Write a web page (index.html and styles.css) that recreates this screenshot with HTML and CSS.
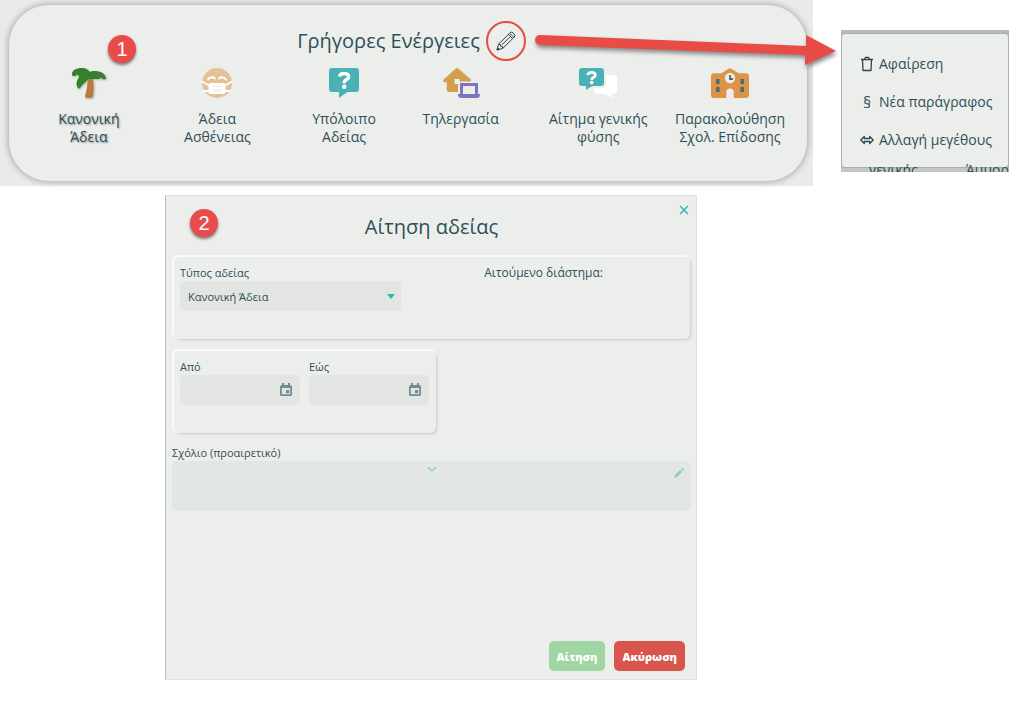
FILE: index.html
```html
<!DOCTYPE html>
<html lang="el">
<head>
<meta charset="utf-8">
<title>Γρήγορες Ενέργειες</title>
<link rel="stylesheet" href="styles.css">
</head>
<body>
<div class="top">
  <section class="stage">
    <div class="panel">
      <header class="panel-head">
        <h1 class="panel-title">Γρήγορες Ενέργειες</h1>
        <button class="edit" type="button" aria-label="Επεξεργασία">
          <svg width="20" height="20" viewBox="0 0 20 20" fill="none" stroke="#2a4550" stroke-width="1" stroke-linejoin="round"><path d="M1 19 L2.600 13.200 L14 1.800 Q15.500 .4 17.200 2 L18 2.800 Q19.600 4.500 18.200 6 L6.800 17.400Z M2.600 13.200 L4.400 13.500 L4.700 15.300 L6.500 15.600 L6.800 17.400 M12.400 3.400 L16.600 7.600 M13.600 2.200 L17.800 6.400 M6 13.800 L13.800 6"/><path d="M1 19 L1.600 16.600 L3.400 18.300Z" fill="#2a4550"/></svg>
        </button>
      </header>
      <nav class="actions">
        <button class="action active" type="button">
          <svg class="icon" width="38" height="32" viewBox="0 0 38 32"><path fill="#b97b3e" d="M17.500 10.500 H22.500 C24 17 24 23 23 29 Q22.800 31 20.500 31 H17 Q14.800 31 15.100 28.500 C17 22.500 17.800 17 17.500 10.500Z"/><path fill="#37802b" d="M2 7 C2 3 7 1 12 1 C16 1 18.500 3 20 5 C24 3 36 4 36 12.200 H32.500 L31 10.500 L29.500 12 H18 C15.500 16 12 17 10 21 Q8.500 22.500 7.500 20.500 C5.500 17 7 13 9.300 9.800 L7 7.200 L5.500 9 H2.500 Q2 8.500 2 7Z"/></svg>
          <span>Κανονική<br>Άδεια</span>
        </button>
        <button class="action" type="button">
          <svg class="icon" width="38" height="32" viewBox="0 0 38 32"><circle cx="19" cy="16" r="15" fill="#e5c197"/><path fill="none" stroke="#fff" stroke-width="2" stroke-linecap="round" d="M10 12.500 C12 9.500 15 10 17 11.500 M21 11.500 C23 10 26 9.500 28 12.500 M4 14.500 L11 18.500 M34 14.500 L27 18.500 M6.500 24 H11 M31.500 24 H27"/><rect x="10.500" y="16" width="17" height="11" rx="2" fill="#fff"/><path stroke="#eceeeb" stroke-width="1.300" d="M14 19.500H24M14 23.500H24"/></svg>
          <span>Άδεια<br>Ασθένειας</span>
        </button>
        <button class="action" type="button">
          <svg class="icon" width="38" height="32" viewBox="0 0 38 32"><path fill="#4ab1b7" d="M7 1H31Q34 1 34 4V22Q34 25 31 25H22.500L14 31V25H7Q4 25 4 22V4Q4 1 7 1Z"/><path fill="none" stroke="#fff" stroke-width="3.400" d="M14.500 9.500C15 6.800 17 6.500 19 6.500C24.500 6.500 24.700 11 21.500 12.600C19.500 13.600 19.200 14 19.200 16.300"/><circle cx="19.200" cy="19.800" r="2.200" fill="#fff"/></svg>
          <span>Υπόλοιπο<br>Αδείας</span>
        </button>
        <button class="action" type="button">
          <svg class="icon" width="38" height="32" viewBox="0 0 38 32"><path fill="#d2a04d" d="M13.500 1.700Q15 .3 16.500 1.700L29 12.500Q29.500 14 28 14.500H17.500V12H12.500V17H16V25H7Q4.800 25 4.800 23V15.300H2Q.3 14.500 1.400 12.700Z"/><path fill="none" stroke="#7d75bd" stroke-width="3" d="M19.500 27V17.500H34.500V27"/><path fill="#7d75bd" d="M16 27H38V28Q37.500 31 35 31H19Q16.500 31 16 28Z"/></svg>
          <span>Τηλεργασία</span>
        </button>
        <button class="action" type="button">
          <svg class="icon" width="38" height="32" viewBox="0 0 38 32"><path fill="#fff" d="M27 8H35Q38 8 38 11V23Q38 27 35 27H33V31L26 27H18Q15 26 15 23V21H23Q27 21 27 17Z"/><path fill="#4ab1b7" d="M3 1H22Q25 1 25 4V16Q25 19 22 19H13L7 23V19H3Q0 19 0 16V4Q0 1 3 1Z"/><path fill="none" stroke="#fff" stroke-width="2.800" d="M8.800 8C9.300 5.700 11 5.400 12.600 5.400C17 5.400 17.200 9 14.600 10.200C12.900 11 12.700 11.400 12.700 13"/><circle cx="12.700" cy="15.600" r="1.800" fill="#fff"/></svg>
          <span>Αίτημα γενικής<br>φύσης</span>
        </button>
        <button class="action" type="button">
          <svg class="icon" width="38" height="32" viewBox="0 0 38 32"><path fill="#db9448" d="M18 1.500Q19 .7 20 1.500L27.500 6.300H35Q38 6.300 38 9V28Q38 31 35 31H3Q0 31 0 28V9Q0 6.300 3 6.300H10.500Z"/><circle cx="19" cy="11" r="5.200" fill="#eceeeb"/><path fill="none" stroke="#4f666b" stroke-width="1.800" d="M19 8V12H22"/><path fill="#eceeeb" d="M15.300 31V25Q15.300 21.500 19 21.500T22.700 25V31Z"/><path fill="#4f6b70" d="M5 12H8.600V17H5ZM5 20H8.600V25H5ZM29.400 12H33V17H29.400ZM29.400 20H33V25H29.400Z"/></svg>
          <span>Παρακολούθηση<br>Σχολ. Επίδοσης</span>
        </button>
      </nav>
      <span class="badge badge-one">1</span>
    </div>
    <svg class="arrow" width="304" height="40" viewBox="0 0 304 40"><path fill="#e94b46" d="M6 5 L272 16 V5 L302 21 L271 35 V25 L6 15 A5 5 0 0 1 6 5Z"/></svg>
  </section>
  <aside class="popover">
    <menu class="menu">
      <li><button class="menu-item" type="button"><svg width="14" height="16" viewBox="0 0 14 16" fill="none" stroke="#2a4550" stroke-width="1.300" stroke-linejoin="round"><path d="M1 3.500H13M4.500 3.500L5.500 1.300H8.500L9.500 3.500M2.500 3.500L3 14.500H11L11.500 3.500"/></svg>Αφαίρεση</button></li>
      <li><button class="menu-item" type="button"><span class="glyph">§</span>Νέα παράγραφος</button></li>
      <li><button class="menu-item" type="button"><svg width="14" height="16" viewBox="0 0 14 16" fill="none" stroke="#2a4550" stroke-width="1.300" stroke-linejoin="round"><path d="M.8 8L4.300 4.500V6.500H9.700V4.500L13.200 8L9.700 11.500V9.500H4.300V11.500Z"/></svg>Αλλαγή μεγέθους</button></li>
    </menu>
    <div class="under"><span>γενικής</span><span>Άμμορος</span></div>
  </aside>
</div>

<div class="lower">
  <form class="dialog">
    <button class="close" type="button" aria-label="Κλείσιμο"><svg width="10" height="10" viewBox="0 0 10 10" stroke="#35b7b0" stroke-width="1.500"><path d="M1 1L9 9M9 1L1 9"/></svg></button>
    <span class="badge badge-two">2</span>
    <h2 class="dialog-title">Αίτηση αδείας</h2>
    <div class="card type-card">
      <div class="field">
        <label for="type">Τύπος αδείας</label>
        <div class="control">
          <select id="type"><option>Κανονική Άδεια</option></select>
          <svg class="caret" width="8" height="5" viewBox="0 0 8 5"><path fill="#28b8ae" d="M0 0H8L4 5Z"/></svg>
        </div>
      </div>
      <p class="requested">Αιτούμενο διάστημα:</p>
    </div>
    <div class="card date-card">
      <div class="field">
        <label for="from">Από</label>
        <div class="control">
          <input id="from" type="text">
          <button class="pick" type="button" aria-label="Ημερολόγιο από"><svg width="12" height="14" viewBox="0 0 12 14"><path fill="#6f8d93" fill-rule="evenodd" d="M2 0H4V2H8V0H10V2Q12 2 12 4V11.500Q12 13 10.500 13H1.500Q0 13 0 11.500V4Q0 2 2 2ZM1.800 5V11.200H10.200V5ZM6 7H9.200V10.200H6Z"/></svg></button>
        </div>
      </div>
      <div class="field">
        <label for="to">Εώς</label>
        <div class="control">
          <input id="to" type="text">
          <button class="pick" type="button" aria-label="Ημερολόγιο έως"><svg width="12" height="14" viewBox="0 0 12 14"><path fill="#6f8d93" fill-rule="evenodd" d="M2 0H4V2H8V0H10V2Q12 2 12 4V11.500Q12 13 10.500 13H1.500Q0 13 0 11.500V4Q0 2 2 2ZM1.800 5V11.200H10.200V5ZM6 7H9.200V10.200H6Z"/></svg></button>
        </div>
      </div>
    </div>
    <div class="comment">
      <label for="comment">Σχόλιο (προαιρετικό)</label>
      <div class="control">
        <textarea id="comment"></textarea>
        <svg class="chevron" width="10" height="6" viewBox="0 0 10 6" fill="none" stroke="#86d0cc" stroke-width="1.400"><path d="M1 1L5 5L9 1"/></svg>
        <svg class="pencil" width="10" height="10" viewBox="0 0 10 10" fill="#86cfca"><path d="M.5 7.500L6 2L8 4L2.500 9.500H.5ZM6.800 1.300L7.500 .6Q8.200 0 8.900 .7L9.400 1.200Q10 2 9.400 2.600L8.800 3.200Z"/></svg>
      </div>
    </div>
    <footer class="buttons">
      <button class="btn submit" type="button">Αίτηση</button>
      <button class="btn cancel" type="button">Ακύρωση</button>
    </footer>
  </form>
</div>
</body>
</html>
```

FILE: styles.css
```css
* { box-sizing: border-box; }
body {
  margin: 0;
  background: #fff;
  color: #2f4e58;
  font-family: "Open Sans", "Noto Sans", sans-serif;
  font-size: 14px;
}
button, input, select, textarea { font: inherit; color: inherit; border: 0; background: none; padding: 0; margin: 0; }
h1, h2, p, menu { margin: 0; padding: 0; font-weight: 400; }
svg { display: block; flex: none; }

.top {
  display: grid;
  grid-template-columns: 813fr 168fr;
  column-gap: 28px;
  padding-right: 9px;
  align-items: start;
}
.stage {
  position: relative;
  background: #e9ebe8;
  padding: 5px 6px 5px 9px;
}
.panel {
  position: relative;
  min-height: 176px;
  border-radius: 40px;
  background: #eceeeb;
  box-shadow: 0 0 6px 1px #a9abaa;
  padding: 16px 22px 0 22px;
}
.panel-head { display: flex; justify-content: center; align-items: center; gap: 6px; padding-left: 7px; }
.panel-title { font-size: 20px; line-height: 28px; }
.edit {
  width: 40px;
  height: 40px;
  border: 2px solid #e94b46;
  border-radius: 50%;
  display: grid;
  place-items: center;
}
.actions {
  display: grid;
  grid-template-columns: 116fr 142fr 112fr 122fr 154fr 108fr;
  margin-top: 6px;
}
.action {
  display: flex;
  flex-direction: column;
  align-items: center;
  gap: 11px;
  line-height: 18px;
  white-space: nowrap;
}
.active { text-shadow: 1px 1px 2px #8a9294; }
.active .icon { filter: drop-shadow(1px 1px 1px #b0b4b2); }
.badge {
  position: absolute;
  width: 28px;
  height: 28px;
  border-radius: 50%;
  background: #e94b4b;
  color: #fff;
  font: 20px/28px "Liberation Sans", sans-serif;
  text-align: center;
  box-shadow: 0 2px 3px #777;
}
.badge-one { left: 99px; top: 30px; }
.badge-two { left: 24px; top: 13px; }
.arrow { position: absolute; left: 534px; top: 30px; z-index: 2; filter: drop-shadow(1px 3px 2px #888); }

.popover {
  margin-top: 30px;
  padding-top: 3px;
  background: #b5b9b8;
  overflow: hidden;
}
.menu {
  list-style: none;
  background: #eceeeb;
  border: 1px solid #a3b1b3;
  border-radius: 4px;
  padding: 11px 0 9px 18px;
}
.menu-item { display: flex; align-items: center; gap: 5px; height: 37px; line-height: 20px; white-space: nowrap; }
.menu li + li { margin-top: 1px; }
.menu li { display: flex; }
.glyph { width: 14px; text-align: center; font-size: 16px; }
.under {
  display: flex;
  gap: 48px;
  height: 4px;
  line-height: 4px;
  padding-left: 28px;
  white-space: nowrap;
  background: #c3c6c5;
}

.lower { display: grid; grid-template-columns: 165fr 532fr 321fr; padding-top: 9px; }
.dialog {
  grid-column: 2;
  position: relative;
  display: flex;
  flex-direction: column;
  min-height: 485px;
  padding: 16px 5px 8px 6px;
  background: #eceeeb;
  border: 1px solid #dde1df;
  border-left-color: #b4bdbe;
  font-size: 11px;
}
.close { position: absolute; right: 7px; top: 9px; }
.dialog-title { font-size: 20px; line-height: 30px; text-align: center; }
.card {
  border-radius: 5px;
  box-shadow: -1px -1px 1px 1px #fafbfa, 1px 1px 2px #c4c8c5;
  height: 82px;
  padding: 8px 7px 0 6px;
  display: flex;
  gap: 9px;
}
.type-card { margin: 15px 1px 0 2px; justify-content: space-between; }
.date-card { margin: 12px 0 0 2px; width: 262px; }
.type-card .field { flex: 0 0 221px; }
.date-card .field { flex: 1; }
.requested { font-size: 12px; line-height: 16px; margin-right: 80px; }
label { display: block; line-height: 16px; }
.control { position: relative; }
select, input {
  appearance: none;
  display: block;
  width: 100%;
  height: 30px;
  border-radius: 5px;
  background: #e3e5e2;
  padding: 0 8px;
}
.caret { position: absolute; right: 6px; top: 13px; }
.pick { position: absolute; right: 8px; top: 8px; }
.comment { margin-top: 12px; }
textarea {
  display: block;
  width: 100%;
  height: 50px;
  resize: none;
  border-radius: 5px;
  background: #e2e6e4;
  padding: 8px;
}
.chevron { position: absolute; left: calc(50% - 5px); top: 5px; }
.pencil { position: absolute; right: 7px; top: 7px; }
.buttons { display: flex; justify-content: flex-end; gap: 9px; margin-top: auto; padding-right: 6px; }
.btn { height: 30px; padding: 0 8px; border-radius: 5px; color: #fff; font-weight: 800; }
.submit { background: #a0d5a4; }
.cancel { background: #d9544d; }
```
